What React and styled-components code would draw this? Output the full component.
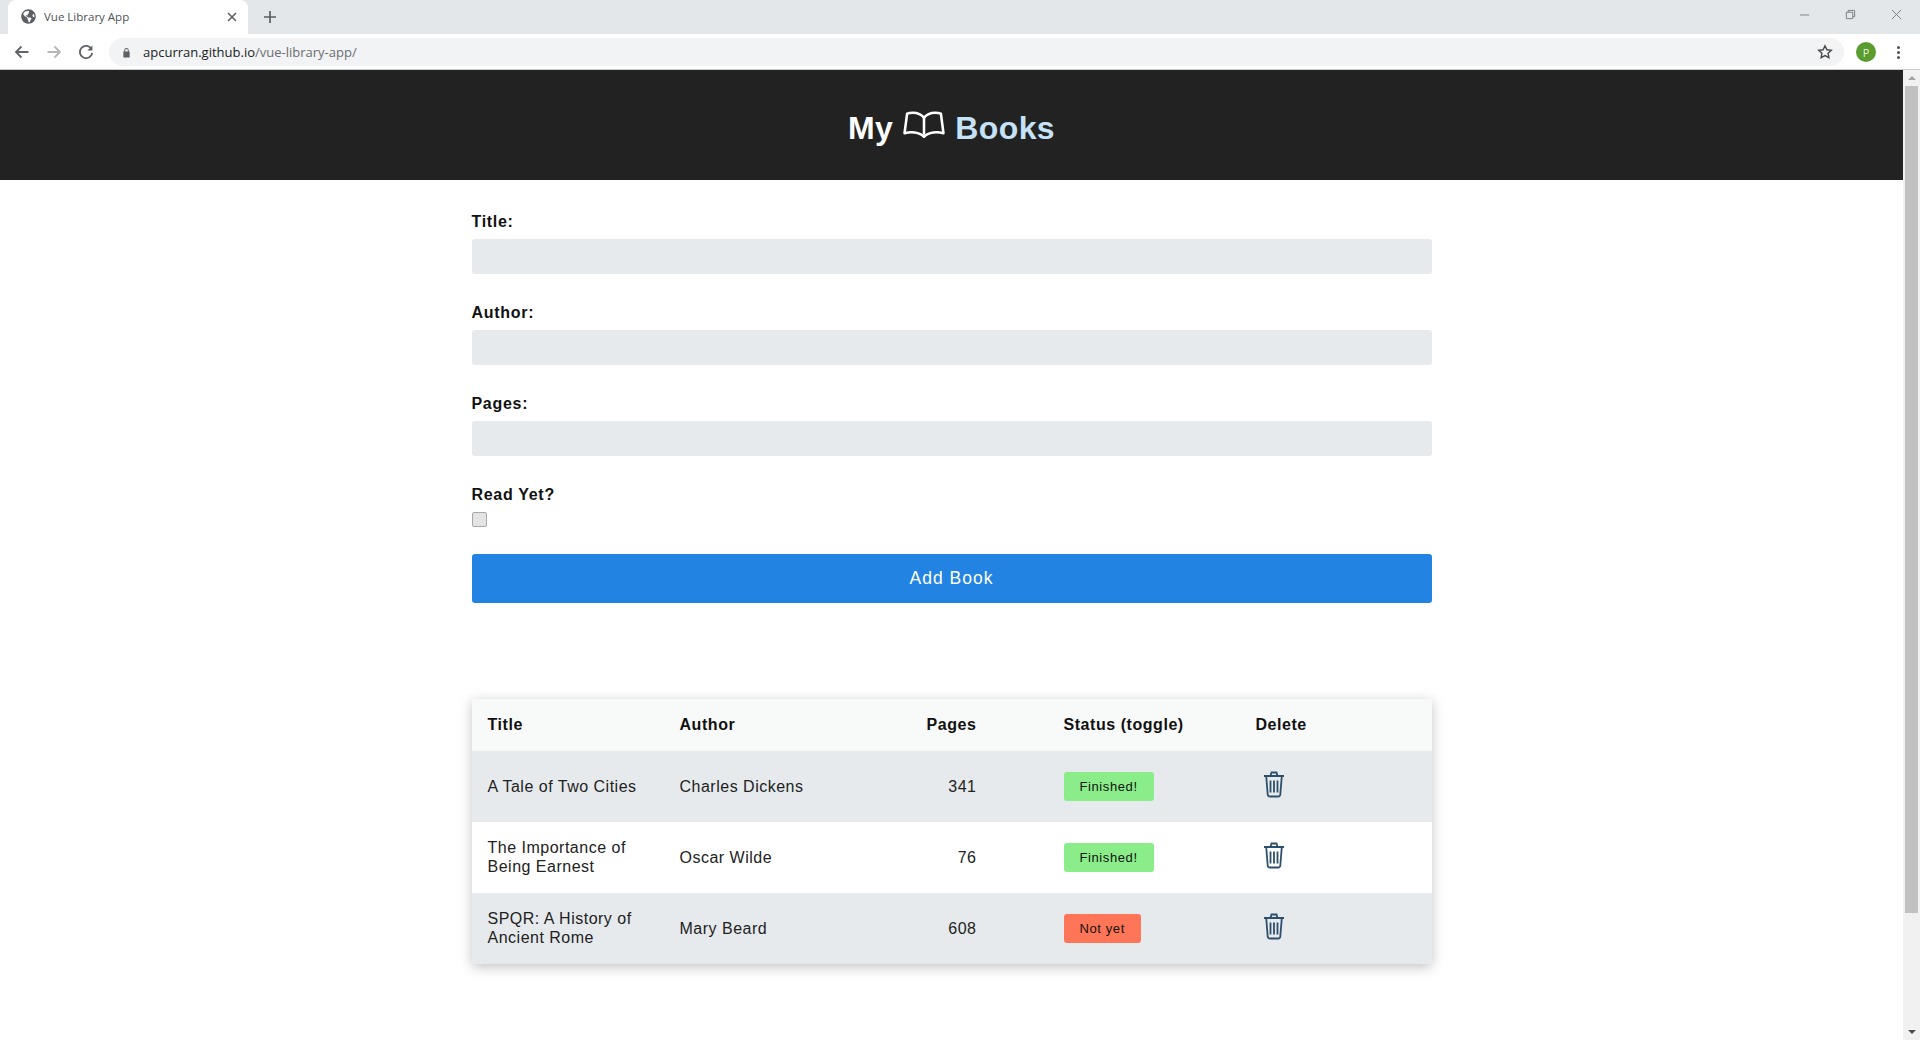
import styled, { createGlobalStyle } from "styled-components";
import { FaGlobeAmericas } from "react-icons/fa";

const books = [
  { title: "A Tale of Two Cities", author: "Charles Dickens", pages: 341, read: true },
  { title: "The Importance of Being Earnest", author: "Oscar Wilde", pages: 76, read: true },
  { title: "SPQR: A History of Ancient Rome", author: "Mary Beard", pages: 608, read: false },
];

const fields = ["Title:", "Author:", "Pages:"];

export default function App() {
  return (
    <Page>
      <GlobalStyle />
      <TabStrip>
        <Tab>
          <TabGlobe />
          <TabTitle>Vue Library App</TabTitle>
          <TabClose viewBox="0 0 10 10">
            <path d="M1 1l8 8M9 1l-8 8" />
          </TabClose>
        </Tab>
        <NewTab viewBox="0 0 12 12">
          <path d="M6 0v12M0 6h12" />
        </NewTab>
        <WindowControls>
          <WindowIcon viewBox="0 0 12 12">
            <path d="M1 6.5h10" />
          </WindowIcon>
          <WindowIcon viewBox="0 0 12 12">
            <path d="M1.500 3.500h7v7h-7zM3.500 3.500v-2h7v7h-2" />
          </WindowIcon>
          <WindowIcon viewBox="0 0 12 12">
            <path d="M1 1l10 10M11 1L1 11" />
          </WindowIcon>
        </WindowControls>
      </TabStrip>
      <Toolbar>
        <NavIcon viewBox="0 0 16 16">
          <path d="M14.500 8H2M7.500 2.500L2 8l5.500 5.500" />
        </NavIcon>
        <NavIcon $muted viewBox="0 0 16 16">
          <path d="M1.500 8H14M8.500 2.500L14 8l-5.500 5.500" />
        </NavIcon>
        <NavIcon viewBox="0 0 16 16">
          <path d="M13.600 5.200A6.200 6.200 0 1 0 14.200 9" />
          <path d="M14.400 1.400v5h-5" fill="#5f6368" stroke="none" />
        </NavIcon>
        <Omnibox>
          <LockIcon viewBox="0 0 10 12">
            <path d="M2.500 5V3.400a2.500 2.500 0 0 1 5 0V5h1v6.500h-7V5zM3.600 5h2.800V3.400a1.400 1.400 0 0 0-2.800 0z" />
          </LockIcon>
          <Url>
            apcurran.github.io<UrlPath>/vue-library-app/</UrlPath>
          </Url>
          <StarIcon viewBox="0 0 16 16">
            <path d="M8 1.800l1.900 4 4.400.5-3.200 3 .8 4.400L8 11.600l-3.900 2.100.8-4.400-3.200-3 4.400-.5z" />
          </StarIcon>
        </Omnibox>
        <Avatar>P</Avatar>
        <Kebab>
          <i />
          <i />
          <i />
        </Kebab>
      </Toolbar>
      <Viewport>
        <Content>
          <Banner>
            <BannerTitle>
              <BannerWord>My</BannerWord>
              <BookIcon viewBox="0 0 41 27">
                <path d="M20.500 6.500C18 3 14 1.500 9.500 1.500C7.500 1.500 5.500 1.800 4 2.500L1.500 21.500C5 20.500 8.500 20.300 11.500 20.800C15 21.400 18.500 22.800 20.500 25C22.500 22.800 26 21.400 29.500 20.800C32.500 20.300 36 20.500 39.500 21.500L37 2.500C35.500 1.800 33.500 1.500 31.500 1.500C27 1.500 23 3 20.500 6.500Z" />
                <path d="M20.500 6.500V23" />
              </BookIcon>
              <BannerWord $accent>Books</BannerWord>
            </BannerTitle>
          </Banner>
          <Main>
            <Form>
              {fields.map((label) => (
                <Field key={label}>
                  <Label>{label}</Label>
                  <TextInput type="text" />
                </Field>
              ))}
              <CheckField>
                <Label>Read Yet?</Label>
                <Checkbox type="checkbox" />
              </CheckField>
              <AddButton type="button">Add Book</AddButton>
            </Form>
            <Table>
              <thead>
                <HeadRow>
                  <HeadCell>Title</HeadCell>
                  <HeadCell>Author</HeadCell>
                  <HeadCell $right>Pages</HeadCell>
                  <HeadCell>Status (toggle)</HeadCell>
                  <HeadCell>Delete</HeadCell>
                </HeadRow>
              </thead>
              <tbody>
                {books.map((book) => (
                  <BookRow key={book.title}>
                    <Cell>{book.title}</Cell>
                    <Cell>{book.author}</Cell>
                    <Cell $right>{book.pages}</Cell>
                    <Cell>
                      <StatusButton $read={book.read}>
                        {book.read ? "Finished!" : "Not yet"}
                      </StatusButton>
                    </Cell>
                    <Cell>
                      <TrashIcon viewBox="0 0 22 27">
                        <path d="M1 5H21M7.500 5L8.500 1.500H13.500L14.500 5M3.200 5L4.700 23.500A2.200 2.200 0 0 0 6.900 25.500H15.100A2.200 2.200 0 0 0 17.300 23.500L18.800 5" />
                        <path d="M7.500 9.500V21.500M11 9.500V21.500M14.500 9.500V21.500" />
                      </TrashIcon>
                    </Cell>
                  </BookRow>
                ))}
              </tbody>
            </Table>
          </Main>
        </Content>
        <Scrollbar>
          <ScrollUp />
          <ScrollThumb />
          <ScrollDown />
        </Scrollbar>
      </Viewport>
    </Page>
  );
}

const GlobalStyle = createGlobalStyle`
  html, body {
    margin: 0;
    height: 100%;
    overflow: hidden;
    background: #fff;
  }
  * {
    box-sizing: border-box;
  }
`;

const Page = styled.div`
  width: 1920px;
  height: 1040px;
  display: flex;
  flex-direction: column;
  overflow: hidden;
  font-family: "Liberation Sans", Arial, sans-serif;
`;

const TabStrip = styled.div`
  height: 34px;
  flex: none;
  display: flex;
  align-items: flex-end;
  padding-left: 8px;
  background: #e4e7ea;
`;

const Tab = styled.div`
  width: 240px;
  height: 34px;
  display: flex;
  align-items: center;
  padding: 0 10px 1px 13px;
  background: #fff;
  border-radius: 8px 8px 0 0;
`;

const TabGlobe = styled(FaGlobeAmericas)`
  width: 15px;
  height: 15px;
  flex: none;
  color: #5a5d61;
`;

const TabTitle = styled.span`
  flex: 1;
  margin-left: 8px;
  font-family: "Open Sans", sans-serif;
  font-size: 11.500px;
  color: #4d5156;
`;

const TabClose = styled.svg`
  width: 10px;
  height: 10px;
  margin-right: 1px;
  fill: none;
  stroke: #5f6368;
  stroke-width: 1.600;
`;

const NewTab = styled.svg`
  width: 12px;
  height: 12px;
  margin: 0 0 11px 16px;
  fill: none;
  stroke: #5a5d61;
  stroke-width: 1.700;
`;

const WindowControls = styled.div`
  margin-left: auto;
  height: 34px;
  display: flex;
  align-items: center;
  gap: 35px;
  padding: 0 18px 6px 0;
`;

const WindowIcon = styled.svg`
  width: 11px;
  height: 11px;
  fill: none;
  stroke: #75787c;
  stroke-width: 1;
`;

const Toolbar = styled.div`
  height: 36px;
  flex: none;
  display: flex;
  align-items: center;
  padding: 1px 0 0 14px;
  background: #fff;
  border-bottom: 1px solid #c9cbce;
`;

const NavIcon = styled.svg`
  width: 16px;
  height: 16px;
  flex: none;
  margin-right: 16px;
  fill: none;
  stroke: ${(props) => (props.$muted ? "#b3b5b8" : "#5f6368")};
  stroke-width: 1.800;
`;

const Omnibox = styled.div`
  width: 1735px;
  height: 28px;
  flex: none;
  margin-left: -1px;
  display: flex;
  align-items: center;
  padding: 0 11px 0 13px;
  background: #f1f3f4;
  border-radius: 14px;
`;

const LockIcon = styled.svg`
  width: 9px;
  height: 11px;
  flex: none;
  fill: #5f6368;
`;

const Url = styled.span`
  flex: 1;
  margin-left: 12px;
  font-family: "Open Sans", sans-serif;
  font-size: 13px;
  color: #202124;
`;

const UrlPath = styled.span`
  color: #6a6e73;
`;

const StarIcon = styled.svg`
  width: 16px;
  height: 16px;
  flex: none;
  fill: none;
  stroke: #45484c;
  stroke-width: 1.400;
`;

const Avatar = styled.div`
  width: 20px;
  height: 20px;
  flex: none;
  margin-left: 12px;
  display: flex;
  align-items: center;
  justify-content: center;
  font-family: "Open Sans", sans-serif;
  font-size: 11px;
  color: #e4f2d8;
  background: #5a9c2f;
  border-radius: 50%;
`;

const Kebab = styled.div`
  flex: none;
  margin-left: 21px;
  display: flex;
  flex-direction: column;
  gap: 2px;

  i {
    width: 3px;
    height: 3px;
    background: #4d5156;
    border-radius: 50%;
  }
`;

const Viewport = styled.div`
  flex: 1;
  min-height: 0;
  display: flex;
`;

const Content = styled.div`
  flex: 1;
  min-width: 0;
`;

const Banner = styled.header`
  height: 110px;
  display: flex;
  align-items: center;
  justify-content: center;
  background: #222;
`;

const BannerTitle = styled.h1`
  margin: 0;
  display: flex;
  align-items: center;
  font-size: 32px;
  font-weight: 700;
  color: #fff;
`;

const BannerWord = styled.span`
  margin-top: 6px;
  letter-spacing: 0.4px;
  color: ${(props) => (props.$accent ? "#c6e2f8" : "#fff")};
`;

const BookIcon = styled.svg`
  width: 42px;
  height: 28px;
  margin: -1px 10px 0 10px;
  fill: none;
  stroke: #fff;
  stroke-width: 2.500;
  stroke-linejoin: round;
`;

const Main = styled.main`
  width: 960px;
  margin: 0 auto;
  padding-top: 33px;
`;

const Form = styled.form`
  display: flex;
  flex-direction: column;
`;

const Field = styled.div`
  height: 91px;
  display: flex;
  flex-direction: column;
`;

const Label = styled.label`
  height: 18px;
  margin-bottom: 8px;
  font-size: 16px;
  line-height: 18px;
  font-weight: 700;
  letter-spacing: 0.7px;
  color: #111;
`;

const TextInput = styled.input`
  height: 35px;
  border: none;
  border-radius: 3px;
  background: #e6eaed;
`;

const CheckField = styled.div`
  display: flex;
  flex-direction: column;
  align-items: flex-start;
`;

const Checkbox = styled.input`
  appearance: none;
  width: 15px;
  height: 15px;
  margin: 0 0 27px;
  background: #e4e4e4;
  border: 1px solid #a9a9a9;
  border-radius: 2px;
`;

const AddButton = styled.button`
  height: 49px;
  border: none;
  border-radius: 3px;
  font-family: inherit;
  font-size: 17.500px;
  letter-spacing: 1px;
  color: #fff;
  background: #2283e2;
`;

const Table = styled.table`
  width: 960px;
  margin-top: 96px;
  table-layout: fixed;
  border-collapse: collapse;
  box-shadow: 0 3px 12px rgba(0, 0, 0, 0.24);
`;

const HeadRow = styled.tr`
  height: 52px;
  background: #f8f9f9;
`;

const HeadCell = styled.th`
  padding: ${(props) => (props.$right ? "0 71px 0 16px" : "0 16px")};
  font-size: 16px;
  font-weight: 700;
  letter-spacing: 0.55px;
  text-align: ${(props) => (props.$right ? "right" : "left")};
  color: #111;
`;

const BookRow = styled.tr`
  height: 71px;
  background: #fff;

  &:nth-child(odd) {
    background: #e6eaed;
  }
`;

const Cell = styled.td`
  padding: ${(props) => (props.$right ? "0 71px 1px 16px" : "0 16px 1px")};
  font-size: 16px;
  line-height: 19px;
  letter-spacing: 0.5px;
  text-align: ${(props) => (props.$right ? "right" : "left")};
  color: #222;
`;

const StatusButton = styled.button`
  height: 29px;
  padding: 0 16px;
  display: block;
  border: none;
  border-radius: 3px;
  font-family: inherit;
  font-size: 13px;
  letter-spacing: 0.6px;
  color: #111;
  background: ${(props) => (props.$read ? "#8aed8a" : "#ff7557")};
`;

const TrashIcon = styled.svg`
  width: 22px;
  height: 27px;
  display: block;
  margin: -3px 0 0 7px;
  fill: none;
  stroke: #2c4f6b;
  stroke-width: 1.800;
`;

const Scrollbar = styled.div`
  width: 17px;
  flex: none;
  display: flex;
  flex-direction: column;
  align-items: center;
  background: #f1f1f1;
`;

const ScrollUp = styled.div`
  flex: none;
  margin: 6px 0 6px;
  border: 4px solid transparent;
  border-top: none;
  border-bottom: 4px solid #a3a3a3;
`;

const ScrollThumb = styled.div`
  width: 13px;
  height: 827px;
  flex: none;
  background: #c1c1c1;
`;

const ScrollDown = styled.div`
  flex: none;
  margin-top: auto;
  margin-bottom: 6px;
  border: 4px solid transparent;
  border-bottom: none;
  border-top: 4px solid #505050;
`;
